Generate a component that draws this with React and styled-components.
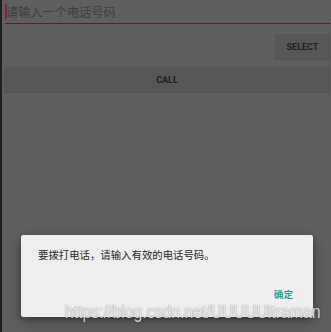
import React from 'react';
import styled, { createGlobalStyle } from 'styled-components';

const GlobalStyle = createGlobalStyle`
  html, body {
    margin: 0;
    padding: 0;
    background: #5f5f5f;
  }
  body {
    font-family: Roboto, "Noto Sans CJK SC", sans-serif;
  }
`

const Screen = styled.div`
  position: relative;
  display: flex;
  width: 331px;
  height: 332px;
  overflow: hidden;
  background: #5f5f5f;
`

const EdgeStrip = styled.div`
  width: 2px;
  flex-shrink: 0;
  background: #1e1f26;
`

const Content = styled.div`
  flex: 1;
  display: flex;
  flex-direction: column;
  padding-right: 1px;
`

const InputRow = styled.div`
  position: relative;
  height: 24px;
  margin-left: 3px;
  display: flex;
  align-items: center;
  border-bottom: 1.5px solid #6a1230;
  box-sizing: border-box;
`

const Cursor = styled.span`
  position: absolute;
  left: 0;
  top: 4px;
  width: 1.5px;
  height: 15px;
  background: #8a1d42;
`

const Placeholder = styled.span`
  font-family: "Noto Sans CJK SC", sans-serif;
  font-size: 12.2px;
  color: #3e3e3e;
  margin-top: 1px;
  margin-left: 1px;
`

const ButtonRow = styled.div`
  display: flex;
  justify-content: ${p => (p.$right ? 'flex-end' : 'stretch')};
  margin-top: ${p => p.$top}px;
  padding-left: ${p => (p.$right ? 0 : 2)}px;
`

const Button = styled.div`
  height: ${p => p.$h}px;
  width: ${p => (p.$w ? p.$w + 'px' : 'auto')};
  flex: ${p => (p.$w ? '0 0 auto' : '1')};
  background: #575757;
  border-radius: 2px;
  box-shadow: 0 1px 1.5px rgba(0, 0, 0, 0.18);
  display: flex;
  align-items: center;
  justify-content: center;
  font-family: Roboto, sans-serif;
  font-weight: 700;
  font-size: 9px;
  color: #1e1e1e;
`

const Dialog = styled.div`
  position: absolute;
  left: 21px;
  top: 235px;
  width: 292px;
  height: 82px;
  background: #eeeeee;
  border-radius: 2px;
  box-shadow: 0 4px 14px rgba(0, 0, 0, 0.35), 0 2px 4px rgba(0, 0, 0, 0.2);
  display: flex;
  flex-direction: column;
  justify-content: space-between;
  padding: 13px 20px 16px 17px;
  box-sizing: border-box;
`

const Message = styled.div`
  font-family: "Noto Sans CJK SC", sans-serif;
  font-size: 10.4px;
  color: #262626;
  line-height: 14px;
`

const Actions = styled.div`
  display: flex;
  justify-content: flex-end;
`

const ActionButton = styled.span`
  font-family: "Noto Sans CJK SC", sans-serif;
  font-size: 9.6px;
  color: #14978b;
  font-weight: 500;
`

const Watermark = styled.div`
  position: absolute;
  left: 65px;
  top: 306px;
  font-family: "Liberation Sans", Arial, sans-serif;
  font-size: 15.8px;
  line-height: 16px;
  color: rgba(255, 255, 255, 0.82);
  white-space: nowrap;
  transform: scaleY(1.2);
  transform-origin: left bottom;
  text-shadow: 0 0 1px rgba(0, 0, 0, 0.4), 0 0 2px rgba(0, 0, 0, 0.15);
`

export default function App() {
  return (
    <>
      <GlobalStyle />
      <Screen>
        <EdgeStrip />
        <Content>
          <InputRow>
            <Cursor />
            <Placeholder>请输入一个电话号码</Placeholder>
          </InputRow>
          <ButtonRow $right $top={10}>
            <Button $w={55} $h={25}>SELECT</Button>
          </ButtonRow>
          <ButtonRow $top={8}>
            <Button $h={25}>CALL</Button>
          </ButtonRow>
        </Content>
        <Dialog>
          <Message>要拨打电话，请输入有效的电话号码。</Message>
          <Actions>
            <ActionButton>确定</ActionButton>
          </Actions>
        </Dialog>
        <Watermark>https://blog.csdn.net/UUUUUltraman</Watermark>
      </Screen>
    </>
  );
}
